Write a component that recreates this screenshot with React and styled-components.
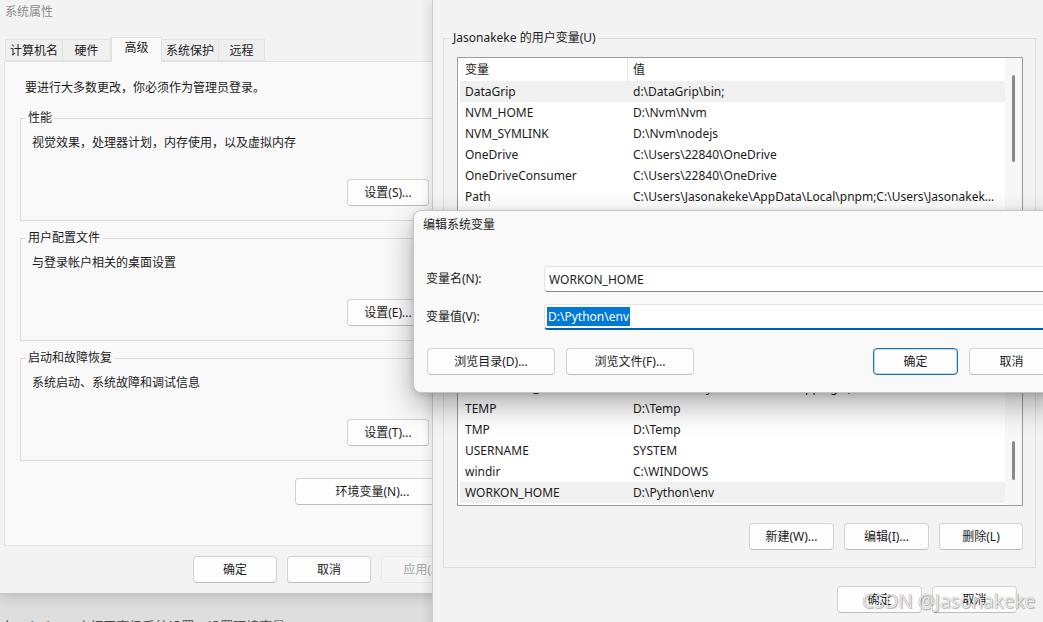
import React from 'react';
import styled, { createGlobalStyle } from 'styled-components';

const GlobalStyle = createGlobalStyle`
    html, body {
        margin: 0;
        padding: 0;
    }
    body {
        width: 1043px;
        height: 622px;
        overflow: hidden;
        font-family: "Noto Sans", "Noto Sans CJK SC", sans-serif;
        font-size: 12px;
        color: #1b1b1b;
    }
`

const tabs = [
    { label: '计算机名', w: 58 },
    { label: '硬件', w: 48 },
    { label: '高级', w: 51, active: true },
    { label: '系统保护', w: 57 },
    { label: '远程', w: 46 },
]

const groups = [
    { title: '性能', text: '视觉效果，处理器计划，内存使用，以及虚拟内存', button: '设置(S)...' },
    { title: '用户配置文件', text: '与登录帐户相关的桌面设置', button: '设置(E)...' },
    { title: '启动和故障恢复', text: '系统启动、系统故障和调试信息', button: '设置(T)...' },
]

const userVars = [
    ['DataGrip', 'd:\\DataGrip\\bin;', true],
    ['NVM_HOME', 'D:\\Nvm\\Nvm'],
    ['NVM_SYMLINK', 'D:\\Nvm\\nodejs'],
    ['OneDrive', 'C:\\Users\\22840\\OneDrive'],
    ['OneDriveConsumer', 'C:\\Users\\22840\\OneDrive'],
    ['Path', 'C:\\Users\\Jasonakeke\\AppData\\Local\\pnpm;C:\\Users\\Jasonakeke\\AppData\\Local\\Programs\\Microsoft VS Code\\bin'],
    ['PNPM_HOME', 'C:\\Users\\Jasonakeke\\AppData\\Local\\pnpm'],
    ['TEMP', 'C:\\Users\\Jasonakeke\\AppData\\Local\\Temp'],
]

const systemVars = [
    ['ComSpec', 'C:\\WINDOWS\\system32\\cmd.exe'],
    ['DriverData', 'C:\\Windows\\System32\\Drivers\\DriverData'],
    ['NUMBER_OF_PROCESSORS', '16'],
    ['OS', 'Windows_NT'],
    ['PROCESSOR_IDENTIFIER', 'Intel64 Family 6 Model 154 Stepping 3, GenuineIntel'],
    ['TEMP', 'D:\\Temp'],
    ['TMP', 'D:\\Temp'],
    ['USERNAME', 'SYSTEM'],
    ['windir', 'C:\\WINDOWS'],
    ['WORKON_HOME', 'D:\\Python\\env', true],
]

function VarList({ rows, height, alignBottom, thumbTop, thumbHeight }) {
    return (
        <ListBox $height={height}>
            <ListMain>
                <ListHeader>
                    <HeaderCell $divider>变量</HeaderCell>
                    <HeaderCell>值</HeaderCell>
                </ListHeader>
                <ListBody $bottom={alignBottom}>
                    {rows.map(([name, value, selected]) => (
                        <Row key={name} $selected={selected}>
                            <Cell>{name}</Cell>
                            <Cell>{value}</Cell>
                        </Row>
                    ))}
                </ListBody>
            </ListMain>
            <ScrollTrack $top={thumbTop}>
                <ScrollThumb $h={thumbHeight} />
            </ScrollTrack>
        </ListBox>
    )
}

function App() {
    return (
        <Desktop>
            <GlobalStyle />
            <DesktopCaption>在 Windows 中打开高级系统设置，设置环境变量</DesktopCaption>

            <Window $left={0} $top={0} $width={476} $height={593} $z={1}>
                <WindowTitle>系统属性</WindowTitle>
                <TabStrip>
                    {tabs.map(t => (
                        <Tab key={t.label} $w={t.w} $active={t.active}>{t.label}</Tab>
                    ))}
                </TabStrip>
                <TabPanel>
                    <Notice>要进行大多数更改，你必须作为管理员登录。</Notice>
                    {groups.map(g => (
                        <Group key={g.title}>
                            <GroupLegend>{g.title}</GroupLegend>
                            <GroupText>{g.text}</GroupText>
                            <GroupActions>
                                <Button $w={82}>{g.button}</Button>
                            </GroupActions>
                        </Group>
                    ))}
                    <PanelActions>
                        <Button $w={155}>环境变量(N)...</Button>
                    </PanelActions>
                </TabPanel>
                <Footer $right={11} $mt={10}>
                    <Button $w={84}>确定</Button>
                    <Button $w={84}>取消</Button>
                    <Button $w={84} $disabled>应用(A)</Button>
                </Footer>
            </Window>

            <Window $left={432} $top={0} $width={614} $height={640} $z={2} $front>
                <VarGroup>
                    <VarLegend>Jasonakeke 的用户变量(U)</VarLegend>
                    <VarList rows={userVars} height={170} thumbTop={17} thumbHeight={87} />
                    <VarActions $mt={18}>
                        <Button $w={85}>新建(N)...</Button>
                        <Button $w={85}>编辑(E)...</Button>
                        <Button $w={84}>删除(D)</Button>
                    </VarActions>
                </VarGroup>
                <VarGroup $mt={7}>
                    <VarLegend>系统变量(S)</VarLegend>
                    <VarList rows={systemVars} height={181} alignBottom thumbTop={115} thumbHeight={39} />
                    <VarActions $mt={17}>
                        <Button $w={85}>新建(W)...</Button>
                        <Button $w={85}>编辑(I)...</Button>
                        <Button $w={84}>删除(L)</Button>
                    </VarActions>
                </VarGroup>
                <Footer $right={29} $mt={18}>
                    <Button $w={85}>确定</Button>
                    <Button $w={85}>取消</Button>
                </Footer>
            </Window>

            <Dialog>
                <DialogTitle>编辑系统变量</DialogTitle>
                <FormGrid>
                    <FieldLabel>变量名(N):</FieldLabel>
                    <TextInput>WORKON_HOME</TextInput>
                    <FieldLabel>变量值(V):</FieldLabel>
                    <TextInput $focused>
                        <Selection>D:\Python\env</Selection>
                    </TextInput>
                </FormGrid>
                <DialogActions>
                    <Button $w={128}>浏览目录(D)...</Button>
                    <Button $w={128}>浏览文件(F)...</Button>
                    <Spacer />
                    <Button $w={85} $default>确定</Button>
                    <Button $w={85}>取消</Button>
                </DialogActions>
            </Dialog>

            <Watermark>CSDN @Jasonakeke</Watermark>
        </Desktop>
    )
}

export default App

const Desktop = styled.div`
    position: relative;
    width: 1043px;
    height: 622px;
    overflow: hidden;
    background: linear-gradient(180deg, #d6d6d6 0%, #dedede 100%);
`

const DesktopCaption = styled.div`
    position: absolute;
    left: 2px;
    top: 617px;
    font-size: 13px;
    line-height: 18px;
    color: #4a4a4a;
    white-space: nowrap;
`

const Window = styled.div`
    position: absolute;
    left: ${p => p.$left}px;
    top: ${p => p.$top}px;
    width: ${p => p.$width}px;
    height: ${p => p.$height}px;
    z-index: ${p => p.$z};
    box-sizing: border-box;
    display: flex;
    flex-direction: column;
    background: #f3f3f3;
    border-left: ${p => (p.$front ? '1px solid #cbcbcb' : 'none')};
    padding-top: ${p => (p.$front ? '29px' : '0')};
    box-shadow: ${p => (p.$front ? '-3px 0 10px rgba(0, 0, 0, 0.10)' : '0 3px 12px rgba(0, 0, 0, 0.18)')};
`

const WindowTitle = styled.div`
    height: 24px;
    line-height: 24px;
    padding-left: 5px;
    color: #8c8c8c;
`

const TabStrip = styled.div`
    position: relative;
    z-index: 1;
    margin-top: 13px;
    height: 24px;
    padding-left: 5px;
    display: flex;
    align-items: flex-end;
`

const Tab = styled.div`
    box-sizing: border-box;
    width: ${p => p.$w}px;
    height: ${p => (p.$active ? 25 : 22)}px;
    margin-bottom: ${p => (p.$active ? -1 : 0)}px;
    line-height: ${p => (p.$active ? 20 : 22)}px;
    text-align: center;
    border: 1px solid #e2e2e2;
    border-bottom: ${p => (p.$active ? 'none' : '1px solid #e2e2e2')};
    border-left: ${p => (p.$active ? '1px solid #e2e2e2' : 'none')};
    background: ${p => (p.$active ? '#f9f9f9' : '#efefef')};

    &:first-child {
        border-left: 1px solid #e2e2e2;
    }
`

const TabPanel = styled.div`
    box-sizing: border-box;
    margin-left: 4px;
    width: 462px;
    height: 485px;
    padding: 17px 15px 0 15px;
    background: #f9f9f9;
    border: 1px solid #e2e2e2;
`

const Notice = styled.div`
    line-height: 18px;
    margin-left: 5px;
`

const Group = styled.fieldset`
    margin: 8px 0 0 0;
    min-width: 0;
    padding: 0 20px 14px 11px;
    border: 1px solid #dcdcdc;

    &:first-of-type {
        margin-top: 12px;
    }
`

const GroupLegend = styled.legend`
    margin-left: -6px;
    padding: 0 2px;
    line-height: 18px;
`

const GroupText = styled.div`
    margin-top: 7px;
    line-height: 18px;
`

const GroupActions = styled.div`
    margin-top: 27px;
    display: flex;
    justify-content: flex-end;
`

const PanelActions = styled.div`
    margin-top: 17px;
    display: flex;
    justify-content: flex-end;
`

const Footer = styled.div`
    margin-top: ${p => p.$mt}px;
    padding-right: ${p => p.$right}px;
    display: flex;
    justify-content: flex-end;
    gap: 10px;
`

const Button = styled.div`
    box-sizing: border-box;
    flex: none;
    width: ${p => p.$w}px;
    height: 27px;
    line-height: 25px;
    text-align: center;
    white-space: nowrap;
    border-radius: 4px;
    background: ${p => (p.$disabled ? '#f5f5f5' : '#fdfdfd')};
    color: ${p => (p.$disabled ? '#a4a4a4' : '#1b1b1b')};
    border: 1px solid ${p => (p.$default ? '#1f6db0' : p.$disabled ? '#e8e8e8' : '#d3d3d3')};
    border-bottom-color: ${p => (p.$default ? '#1f6db0' : p.$disabled ? '#e8e8e8' : '#bdbdbd')};
    box-shadow: ${p => (p.$default ? 'inset 0 0 0 1px rgba(31, 109, 176, 0.25)' : 'none')};
`

const VarGroup = styled.fieldset`
    margin: ${p => p.$mt || 0}px 10px 0 10px;
    min-width: 0;
    padding: 0 12px 17px 13px;
    border: 1px solid #dcdcdc;
`

const VarLegend = styled.legend`
    margin-left: -6px;
    padding: 0 2px;
    line-height: 18px;
`

const VarActions = styled.div`
    margin-top: ${p => p.$mt}px;
    display: flex;
    justify-content: flex-end;
    gap: 10px;
`

const ListBox = styled.div`
    box-sizing: border-box;
    margin-top: 10px;
    height: ${p => p.$height}px;
    display: grid;
    grid-template-columns: 1fr 17px;
    background: #ffffff;
    border: 1px solid #9c9c9c;
`

const ListMain = styled.div`
    min-width: 0;
    min-height: 0;
    padding-left: 2px;
    display: flex;
    flex-direction: column;
`

const ListHeader = styled.div`
    flex: none;
    height: 23px;
    display: grid;
    grid-template-columns: 168px 1fr;
`

const HeaderCell = styled.div`
    line-height: 23px;
    padding-left: 5px;
    border-right: ${p => (p.$divider ? '1px solid #e6e6e6' : 'none')};
`

const ListBody = styled.div`
    flex: 1;
    min-height: 0;
    overflow: hidden;
    padding-bottom: 2px;
    display: flex;
    flex-direction: column;
    justify-content: ${p => (p.$bottom ? 'flex-end' : 'flex-start')};
`

const Row = styled.div`
    flex: none;
    height: 21px;
    display: grid;
    grid-template-columns: 168px 1fr;
    background: ${p => (p.$selected ? '#f0f0f0' : 'transparent')};
`

const Cell = styled.div`
    line-height: 21px;
    padding-left: 5px;
    padding-right: 4px;
    white-space: nowrap;
    overflow: hidden;
    text-overflow: ellipsis;
`

const ScrollTrack = styled.div`
    background: #f7f7f7;
    padding-top: ${p => p.$top}px;
    display: flex;
    flex-direction: column;
    align-items: center;
`

const ScrollThumb = styled.div`
    width: 3px;
    height: ${p => p.$h}px;
    border-radius: 2px;
    background: #8a8a8a;
`

const Dialog = styled.div`
    position: absolute;
    left: 413px;
    top: 210px;
    z-index: 3;
    box-sizing: border-box;
    width: 653px;
    height: 183px;
    padding: 5px 11px 0 9px;
    background: #f9f9f9;
    border: 1px solid #c4c4c4;
    border-radius: 8px;
    box-shadow: 0 12px 30px rgba(0, 0, 0, 0.32), 0 2px 6px rgba(0, 0, 0, 0.12);
`

const DialogTitle = styled.div`
    line-height: 18px;
`

const FormGrid = styled.div`
    margin-top: 32px;
    margin-left: 3px;
    display: grid;
    grid-template-columns: 118px 1fr;
    row-gap: 12px;
    align-items: center;
`

const FieldLabel = styled.div`
    line-height: 18px;
`

const TextInput = styled.div`
    box-sizing: border-box;
    height: 26px;
    padding-left: ${p => (p.$focused ? 2 : 4)}px;
    display: flex;
    align-items: center;
    background: #ffffff;
    border: 1px solid #e4e4e4;
    border-bottom: ${p => (p.$focused ? '2px solid #005fb8' : '1px solid #8a8a8a')};
    border-radius: 4px;
    white-space: nowrap;
`

const Selection = styled.span`
    display: inline-block;
    line-height: 19px;
    padding: 0 1px;
    background: #0078d7;
    color: #ffffff;
`

const DialogActions = styled.div`
    margin-top: 18px;
    margin-left: 4px;
    display: flex;
    gap: 11px;
`

const Spacer = styled.div`
    flex: 1;
`

const Watermark = styled.div`
    position: absolute;
    left: 862px;
    top: 589px;
    z-index: 4;
    font-size: 19px;
    line-height: 24px;
    white-space: nowrap;
    color: rgba(255, 255, 255, 0.82);
    text-shadow: 0 0 1px rgba(0, 0, 0, 0.45), 1px 1px 1px rgba(0, 0, 0, 0.25);
`
